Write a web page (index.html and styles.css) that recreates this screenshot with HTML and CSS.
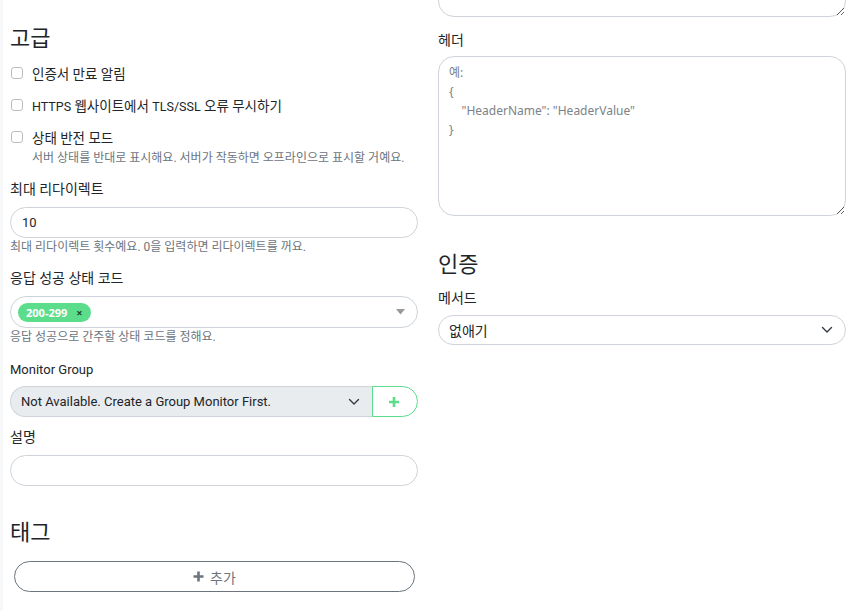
FILE: index.html
```html
<!DOCTYPE html>
<html lang="ko">
<head>
<meta charset="utf-8">
<link rel="stylesheet" href="styles.css">
</head>
<body>
<div class="card">
  <div class="grid">
    <div class="col">
      <h2 class="section first">고급</h2>
      <label class="check-row"><span class="checkbox"></span><span>인증서 만료 알림</span></label>
      <label class="check-row"><span class="checkbox"></span><span><span class="en">HTTPS</span> 웹사이트에서 <span class="en">TLS/SSL</span> 오류 무시하기</span></label>
      <label class="check-row last"><span class="checkbox"></span><span>상태 반전 모드</span></label>
      <div class="help indent">서버 상태를 반대로 표시해요. 서버가 작동하면 오프라인으로 표시할 거예요.</div>

      <div class="field f1">
        <div class="label">최대 리다이렉트</div>
        <div class="input"><span class="en">10</span></div>
        <div class="help">최대 리다이렉트 횟수예요. 0을 입력하면 리다이렉트를 꺼요.</div>
      </div>

      <div class="field f2">
        <div class="label">응답 성공 상태 코드</div>
        <div class="input multi">
          <span class="chip">200-299<span class="chip-x">×</span></span>
          <svg class="caret" width="9" height="6" viewBox="0 0 9 6"><path d="M0 0h9L4.5 5.5z" fill="#999"/></svg>
        </div>
        <div class="help">응답 성공으로 간주할 상태 코드를 정해요.</div>
      </div>

      <div class="field f3">
        <div class="label en">Monitor Group</div>
        <div class="group">
          <div class="select disabled">
            <span class="en">Not Available. Create a Group Monitor First.</span>
            <svg class="chev" width="12" height="8" viewBox="0 0 12 8"><path d="M1.5 1.5l4.5 4.5 4.5-4.5" fill="none" stroke="#343a40" stroke-width="1.4" stroke-linecap="round" stroke-linejoin="round"/></svg>
          </div>
          <div class="add-btn">
            <svg width="12" height="12" viewBox="0 0 12 12"><path d="M6 1v10M1 6h10" stroke="#5cdd8b" stroke-width="2.6"/></svg>
          </div>
        </div>
      </div>

      <div class="field f4">
        <div class="label">설명</div>
        <div class="input"></div>
      </div>

      <h2 class="section tags">태그</h2>
      <div class="tag-btn">
        <svg width="11" height="11" viewBox="0 0 11 11"><path d="M5.5 0.5v10M0.5 5.5h10" stroke="#6c757d" stroke-width="2.6"/></svg>
        <span>추가</span>
      </div>
    </div>

    <div class="col">
      <textarea class="textarea top-ta"></textarea>
      <div class="label hdr">헤더</div>
      <textarea class="textarea hdr-ta" placeholder="예:&#10;{&#10;    &quot;HeaderName&quot;: &quot;HeaderValue&quot;&#10;}"></textarea>

      <h2 class="section auth">인증</h2>
      <div class="label">메서드</div>
      <div class="select method">
        <span>없애기</span>
        <svg class="chev" width="12" height="8" viewBox="0 0 12 8"><path d="M1.5 1.5l4.5 4.5 4.5-4.5" fill="none" stroke="#343a40" stroke-width="1.4" stroke-linecap="round" stroke-linejoin="round"/></svg>
      </div>
    </div>
  </div>
</div>
</body>
</html>
```

FILE: styles.css
```css
* { box-sizing: border-box; }

html, body {
  margin: 0;
  padding: 0;
  background: #f7f8f9;
  overflow: hidden;
}

body {
  font-family: Roboto, "Noto Sans CJK KR", sans-serif;
  font-size: 14px;
  color: #212529;
}

.en {
  font-family: Roboto, sans-serif;
  font-size: 13px;
}

.card {
  margin-left: 3px;
  background: #fff;
  height: 611px;
  padding: 0 12px 0 7px;
}

.grid {
  display: grid;
  grid-template-columns: 408px 408px;
  column-gap: 20px;
}

.col {
  display: flex;
  flex-direction: column;
  min-width: 0;
}

.section {
  font-size: 22px;
  line-height: 29px;
  font-weight: 400;
  margin: 0;
  color: #212529;
}

.section.first { margin-top: 24px; margin-bottom: 9px; }
.section.tags { margin-top: 32px; margin-bottom: 14px; }
.section.auth { margin-top: 34px; margin-bottom: 9px; }

.check-row {
  display: flex;
  align-items: center;
  gap: 9px;
  height: 21px;
  margin-bottom: 11px;
  padding-left: 1px;
  font-size: 13.5px;
}
.check-row .en { font-size: 12.5px; }
.check-row.last { margin-bottom: 2px; }

.checkbox {
  width: 12px;
  height: 12px;
  border: 1px solid #b9bec3;
  border-radius: 3px;
  background: #fff;
  flex: none;
}

.help {
  font-size: 12px;
  line-height: 18px;
  color: #6c757d;
}
.help.indent { padding-left: 22px; }

.field { display: flex; flex-direction: column; }
.f1 { margin-top: 12px; }
.f2 { margin-top: 12px; }
.f3 { margin-top: 13px; }
.f4 { margin-top: 10px; }

.label {
  line-height: 21px;
  margin-bottom: 7px;
}

.input {
  height: 31px;
  border: 1px solid #ced4da;
  border-radius: 16px;
  padding: 0 11px;
  display: flex;
  align-items: center;
  color: #212529;
}

.input.multi {
  height: 32px;
  padding: 0 10px 0 7px;
  justify-content: space-between;
}

.chip {
  display: inline-flex;
  align-items: center;
  height: 19px;
  padding: 0 8px;
  border-radius: 10px;
  background: #5cdd8b;
  color: #fff;
  font-family: "Noto Sans", sans-serif;
  font-weight: 700;
  font-size: 11px;
}
.chip-x {
  color: #1f4d30;
  font-size: 11px;
  margin-left: 9px;
  font-weight: 700;
}
.caret { margin-right: 2px; }

.group {
  display: flex;
  height: 31px;
  margin-top: -1px;
}

.select {
  display: flex;
  align-items: center;
  justify-content: space-between;
  border: 1px solid #ced4da;
  padding: 0 11px 0 10px;
  color: #212529;
}
.select.disabled {
  flex: 1;
  background: #e9ecef;
  border-radius: 16px 0 0 16px;
  border-right: none;
}
.select.method {
  height: 30px;
  border-radius: 15px;
  margin-top: -1px;
}
.chev { margin-right: 1px; }

.add-btn {
  width: 46px;
  border: 1px solid #5cdd8b;
  border-radius: 0 16px 16px 0;
  display: flex;
  align-items: center;
  justify-content: center;
  padding-right: 2px;
}

.tag-btn {
  margin-left: 4px;
  width: 401px;
  height: 31px;
  border: 1px solid #6c757d;
  border-radius: 16px;
  display: flex;
  align-items: center;
  justify-content: center;
  gap: 6px;
  color: #6c757d;
}

.textarea {
  display: block;
  width: 100%;
  border: 1px solid #ced4da;
  border-radius: 16px;
  font-family: "Noto Sans", "Noto Sans CJK KR", sans-serif;
  font-size: 12px;
  line-height: 19px;
  padding: 6px 10px;
  background: #fff;
  resize: vertical;
  outline: none;
}
.textarea::placeholder { color: #7b8289; }

.top-ta {
  height: 80px;
  margin-top: -63px;
}

.label.hdr { margin-top: 13px; margin-bottom: 5px; }

.hdr-ta { height: 160px; }
```
